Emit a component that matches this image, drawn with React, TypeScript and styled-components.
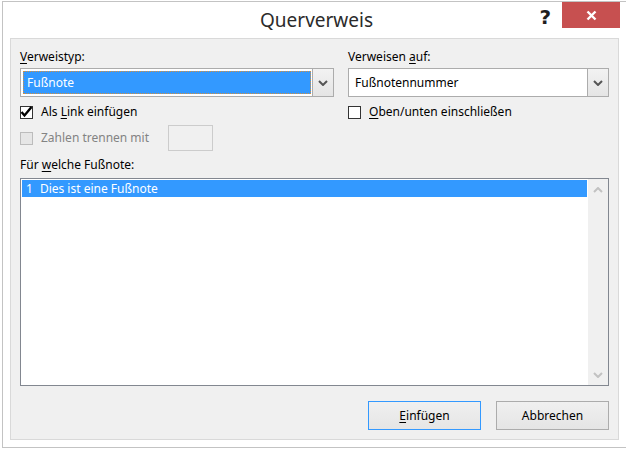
import React from "react";
import styled, { createGlobalStyle } from "styled-components";

const GlobalStyle = createGlobalStyle`
  html, body {
    margin: 0;
    padding: 0;
    background: #ffffff;
    overflow: hidden;
  }
  body {
    font-family: "Noto Sans", "Open Sans", sans-serif;
    font-size: 12px;
    color: #000;
  }
`;

const Window = styled.div`
  box-sizing: border-box;
  width: 625px;
  height: 447px;
  margin: 1px 0 0 2px;
  border: 1px solid #c3c3c3;
  background: #ffffff;
  padding: 0 7px 7px 7px;
  display: flex;
  flex-direction: column;
`;

const TitleBar = styled.div`
  height: 36px;
  display: grid;
  grid-template-columns: 1fr auto 1fr;
  align-items: start;
`;

const Title = styled.div`
  grid-column: 2;
  font-size: 19px;
  color: #2b2b2b;
  line-height: 36px;
  margin-left: 4px;
`;

const Controls = styled.div`
  grid-column: 3;
  justify-self: end;
  display: flex;
  align-items: flex-start;
  gap: 11px;
  margin-right: -1px;
`;

const Help = styled.span`
  font-family: "DejaVu Sans", sans-serif;
  font-weight: bold;
  font-size: 20px;
  color: #1e1e1e;
  line-height: 26px;
  margin-top: 2px;
`;

const Close = styled.div`
  width: 58px;
  height: 26px;
  background: #c75050;
  display: flex;
  align-items: center;
  justify-content: center;
`;

const Panel = styled.div`
  flex: 1;
  border: 1px solid #d9d9d9;
  background: #f0f0f0;
  padding: 10px 9px 9px 9px;
  display: flex;
  flex-direction: column;
`;

const Columns = styled.div`
  display: grid;
  grid-template-columns: 314px 261px;
  column-gap: 14px;
`;

const Column = styled.div`
  display: flex;
  flex-direction: column;
`;

const Label = styled.div<{ $disabled?: boolean }>`
  line-height: 16px;
  color: ${(p) => (p.$disabled ? "#838383" : "#000")};
  white-space: nowrap;
`;

const U = styled.span`
  text-decoration: underline;
  text-underline-offset: 2px;
`;

const Combo = styled.div`
  box-sizing: border-box;
  margin-top: 3px;
  height: 29px;
  border: 1px solid #acacac;
  background: #fff;
  display: flex;
`;

const ComboValue = styled.div<{ $selected?: boolean }>`
  flex: 1;
  margin: 2px 1px 2px 2px;
  padding-left: 3px;
  display: flex;
  align-items: center;
  box-sizing: border-box;
  ${(p) =>
    p.$selected
      ? `background: #3399ff; color: #fff; border: 1px dotted #d9903a;`
      : `color: #000; border: 1px solid transparent;`}
`;

const DropButton = styled.div`
  width: 20px;
  border-left: 1px solid #acacac;
  background: linear-gradient(#f2f2f2, #e5e5e5);
  display: flex;
  align-items: center;
  justify-content: center;
`;

const CheckRow = styled.div`
  margin-top: 7px;
  display: flex;
  align-items: center;
  height: 16px;
`;

const Box = styled.div<{ $disabled?: boolean }>`
  box-sizing: border-box;
  width: 13px;
  height: 13px;
  border: 1px solid ${(p) => (p.$disabled ? "#bcbcbc" : "#333333")};
  background: ${(p) => (p.$disabled ? "#e6e6e6" : "#ffffff")};
  margin-right: 8px;
  display: flex;
  align-items: center;
  justify-content: center;
`;

const SplitRow = styled.div`
  margin-top: 5px;
  display: flex;
  align-items: center;
`;

const SmallInput = styled.div`
  box-sizing: border-box;
  width: 45px;
  height: 26px;
  margin-left: 19px;
  border: 1px solid #cccccc;
  background: #f0f0f0;
`;

const ListLabel = styled(Label)`
  margin-top: 6px;
`;

const ListBox = styled.div`
  margin-top: 5px;
  height: 208px;
  box-sizing: border-box;
  border: 1px solid #828790;
  background: #fff;
  display: flex;
`;

const Items = styled.div`
  flex: 1;
  padding: 1px;
`;

const Item = styled.div<{ $selected?: boolean }>`
  height: 17px;
  line-height: 17px;
  padding-left: 4px;
  display: flex;
  gap: 7px;
  background: ${(p) => (p.$selected ? "#3399ff" : "transparent")};
  color: ${(p) => (p.$selected ? "#fff" : "#000")};
`;

const ScrollBar = styled.div`
  width: 20px;
  background: #f0f0f0;
  display: flex;
  flex-direction: column;
  justify-content: space-between;
  align-items: center;
  padding: 8px 0 7px;
`;

const Buttons = styled.div`
  margin-top: auto;
  display: flex;
  justify-content: flex-end;
  gap: 15px;
`;

const Button = styled.div<{ $default?: boolean }>`
  box-sizing: border-box;
  width: 113px;
  height: 29px;
  border: 1px solid ${(p) => (p.$default ? "#3399ff" : "#acacac")};
  background: linear-gradient(#f0f0f0, #e5e5e5);
  display: flex;
  align-items: center;
  justify-content: center;
`;

const Chevron = ({ up, color }: { up?: boolean; color: string }) => (
  <svg width="10" height="6" viewBox="0 0 10 6">
    <path
      d={up ? "M1 5 L5 1 L9 5" : "M1 1 L5 5 L9 1"}
      fill="none"
      stroke={color}
      strokeWidth="2"
    />
  </svg>
);

export default function App() {
  return (
    <>
      <GlobalStyle />
      <Window>
        <TitleBar>
          <Title>Querverweis</Title>
          <Controls>
            <Help>?</Help>
            <Close>
              <svg width="11" height="11" viewBox="0 0 11 11">
                <path d="M1.5 1.5 L9.5 9.5 M9.5 1.5 L1.5 9.5" stroke="#fff" strokeWidth="2.4" />
              </svg>
            </Close>
          </Controls>
        </TitleBar>
        <Panel>
          <Columns>
            <Column>
              <Label>
                <U>V</U>erweistyp:
              </Label>
              <Combo>
                <ComboValue $selected>Fußnote</ComboValue>
                <DropButton>
                  <Chevron color="#555" />
                </DropButton>
              </Combo>
              <CheckRow>
                <Box>
                  <svg width="13" height="13" viewBox="0 0 13 13" style={{ overflow: "visible" }}>
                    <path d="M1.5 6 L4.5 9.5 L11.5 1" fill="none" stroke="#000" strokeWidth="2.4" />
                  </svg>
                </Box>
                <Label>
                  Als <U>L</U>ink einfügen
                </Label>
              </CheckRow>
              <SplitRow>
                <Box $disabled />
                <Label $disabled>Zahlen trennen mit</Label>
                <SmallInput />
              </SplitRow>
            </Column>
            <Column>
              <Label>
                Verweisen <U>a</U>uf:
              </Label>
              <Combo>
                <ComboValue>Fußnotennummer</ComboValue>
                <DropButton>
                  <Chevron color="#555" />
                </DropButton>
              </Combo>
              <CheckRow>
                <Box />
                <Label>
                  <U>O</U>ben/unten einschließen
                </Label>
              </CheckRow>
            </Column>
          </Columns>
          <ListLabel>
            Für <U>w</U>elche Fußnote:
          </ListLabel>
          <ListBox>
            <Items>
              <Item $selected>
                <span>1</span>
                <span>Dies ist eine Fußnote</span>
              </Item>
            </Items>
            <ScrollBar>
              <Chevron up color="#c2c2c2" />
              <Chevron color="#c2c2c2" />
            </ScrollBar>
          </ListBox>
          <Buttons>
            <Button $default>
              <span>
                <U>E</U>infügen
              </span>
            </Button>
            <Button>Abbrechen</Button>
          </Buttons>
        </Panel>
      </Window>
    </>
  );
}
